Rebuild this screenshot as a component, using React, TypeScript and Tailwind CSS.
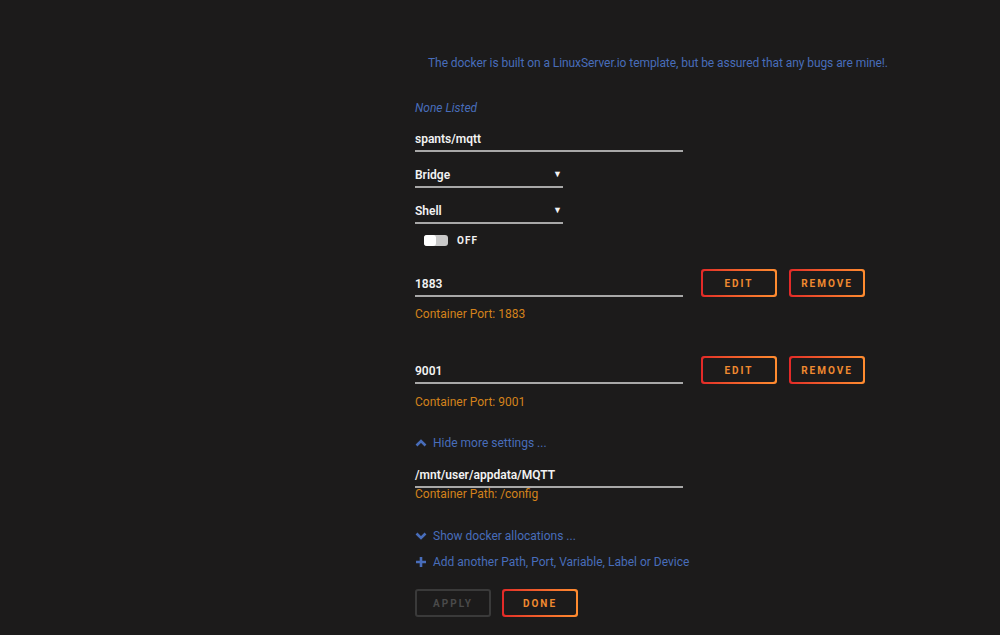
import React from "react";

const font = { fontFamily: "Roboto, 'Noto Sans', sans-serif" };

const OrangeButton = ({ text, disabled = false }: { text: string; disabled?: boolean }) => {
  if (disabled) {
    return (
      <div className="w-[76px] h-[28px] rounded-[3px] border-2 border-[#3a3a3a] flex items-center justify-center text-[10px] font-bold tracking-[2px] text-[#4a4a4a]">
        {text}
      </div>
    );
  }
  return (
    <div className="w-[76px] h-[28px] rounded-[3px] p-[2px] bg-gradient-to-r from-[#e22828] to-[#ff8c2f]">
      <div className="w-full h-full rounded-[2px] bg-[#1c1b1b] flex items-center justify-center text-[10px] font-bold tracking-[2px] text-[#f08a30]">
        {text}
      </div>
    </div>
  );
};

const TextInput = ({ value }: { value: string }) => (
  <div className="w-[268px] h-[28px] pt-[4px] border-b-2 border-[#a8a8a8] flex items-center text-[12px] font-semibold text-[#f2f2f2]">
    {value}
  </div>
);

const SelectInput = ({ value }: { value: string }) => (
  <div className="w-[148px] h-[28px] pt-[4px] border-b-2 border-[#a8a8a8] flex items-center justify-between text-[12px] font-semibold text-[#f2f2f2]">
    <span>{value}</span>
    <span className="text-[9px] mr-[1px]">▼</span>
  </div>
);

const PortRow = ({ port }: { port: string }) => (
  <div className="flex items-start">
    <TextInput value={port} />
    <div className="flex gap-[12px] ml-[18px]">
      <OrangeButton text="EDIT" />
      <OrangeButton text="REMOVE" />
    </div>
  </div>
);

const Chevron = ({ up }: { up?: boolean }) => (
  <svg width="12" height="8" viewBox="0 0 12 8" className="mr-[6px]">
    <path
      d={up ? "M1.5 6.5 L6 2 L10.5 6.5" : "M1.5 1.5 L6 6 L10.5 1.5"}
      fill="none"
      stroke="#486dba"
      strokeWidth="2.6"
    />
  </svg>
);

export default function App() {
  return (
    <div className="min-h-screen w-full bg-[#1c1b1b] overflow-hidden" style={font}>
      <div className="pl-[415px]">
        <div className="mt-[53px] ml-[13px] h-[20px] leading-[20px] text-[12px] tracking-[-0.07px] text-[#486dba] whitespace-nowrap">
          The docker is built on a LinuxServer.io template, but be assured that any bugs are mine!.
        </div>

        <div className="mt-[25px] h-[20px] leading-[20px] text-[12px] italic text-[#486dba]">
          None Listed
        </div>

        <div className="mt-[6px]">
          <TextInput value="spants/mqtt" />
        </div>

        <div className="mt-[8px]">
          <SelectInput value="Bridge" />
        </div>

        <div className="mt-[8px]">
          <SelectInput value="Shell" />
        </div>

        <div className="mt-[7px] h-[18px] flex items-center">
          <div className="ml-[9px] w-[24px] h-[11px] rounded-[3px] bg-[#c9c9c9] flex items-center">
            <div className="w-[12px] h-[11px] rounded-[3px] bg-white" />
          </div>
          <span className="ml-[9px] text-[10px] font-bold tracking-[1px] text-[#f2f2f2]">OFF</span>
        </div>

        <div className="mt-[20px]">
          <PortRow port="1883" />
        </div>
        <div className="mt-[7px] h-[20px] leading-[20px] text-[12px] text-[#d3821b]">
          Container Port: 1883
        </div>

        <div className="mt-[32px]">
          <PortRow port="9001" />
        </div>
        <div className="mt-[8px] h-[20px] leading-[20px] text-[12px] text-[#d3821b]">
          Container Port: 9001
        </div>

        <div className="mt-[21px] h-[20px] flex items-center text-[12px] text-[#486dba]">
          <Chevron up />
          Hide more settings ...
        </div>

        <div className="mt-[7px]">
          <TextInput value="/mnt/user/appdata/MQTT" />
        </div>
        <div className="mt-[-1px] h-[14px] leading-[14px] text-[12px] text-[#d3821b]">
          Container Path: /config
        </div>

        <div className="mt-[25px] h-[20px] flex items-center text-[12px] text-[#486dba]">
          <Chevron />
          Show docker allocations ...
        </div>

        <div className="mt-[6px] h-[20px] flex items-center text-[12px] text-[#486dba]">
          <svg width="12" height="12" viewBox="0 0 12 12" className="mr-[6px]">
            <path d="M6 1 V11 M1 6 H11" stroke="#486dba" strokeWidth="2.6" />
          </svg>
          Add another Path, Port, Variable, Label or Device
        </div>

        <div className="mt-[17px] flex gap-[11px]">
          <OrangeButton text="APPLY" disabled />
          <OrangeButton text="DONE" />
        </div>
      </div>
    </div>
  );
}
